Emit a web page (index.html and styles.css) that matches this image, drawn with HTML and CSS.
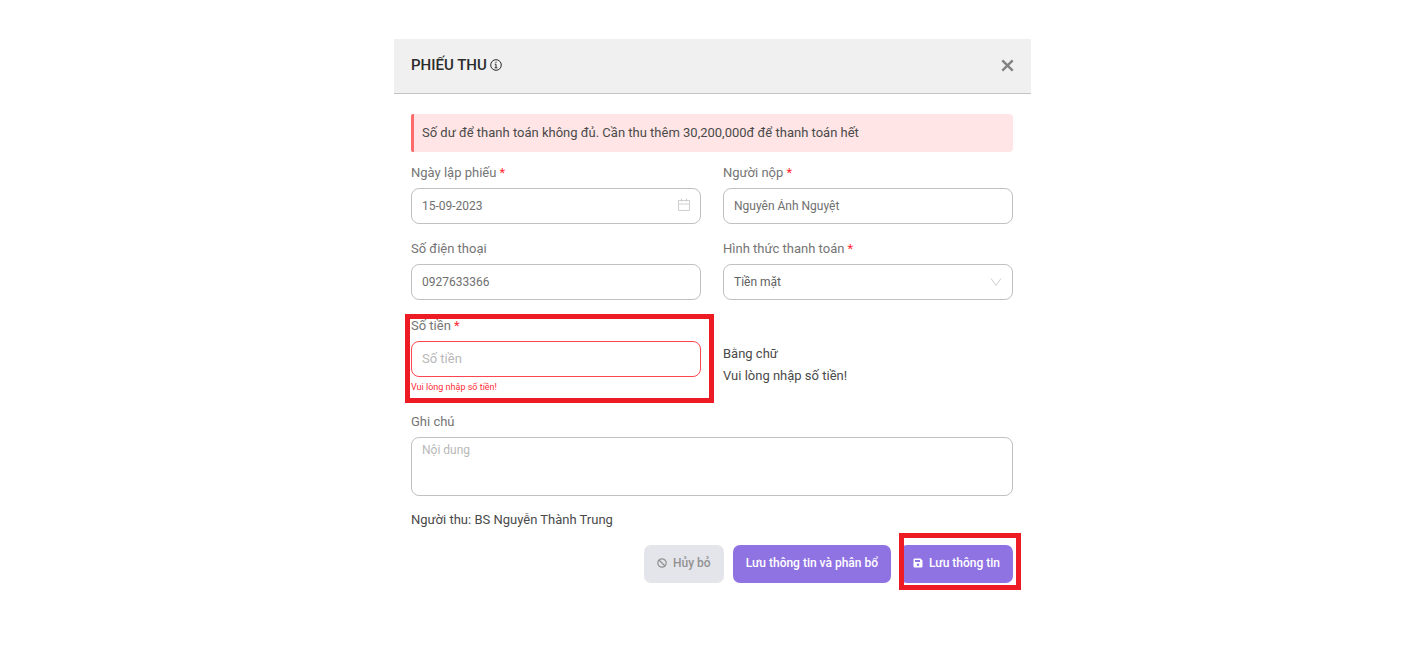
FILE: index.html
```html
<!DOCTYPE html>
<html lang="vi">
<head>
  <meta charset="UTF-8" />
  <meta name="viewport" content="width=device-width, initial-scale=1.0" />
  <title>Phiếu thu</title>
  <link rel="stylesheet" href="styles.css">
</head>

<body>
  <main class="modal">
    <header class="modal-header">
      <h1>PHIẾU THU</h1>
      <svg class="info" viewBox="0 0 12 12" aria-hidden="true">
        <circle cx="6" cy="6" r="5.3" />
        <path d="M6 2.7v1.2M4.8 5.2H6v3.6M4.6 8.8h2.8" />
      </svg>
      <button type="button" class="close" aria-label="Đóng">
        <svg viewBox="0 0 12 12"><path d="M1.2 1.2l9.6 9.6M10.8 1.2l-9.6 9.6" /></svg>
      </button>
    </header>

    <form class="modal-body">
      <p class="alert">Số dư để thanh toán không đủ. Cần thu thêm 30,200,000đ để thanh toán hết</p>

      <div class="grid">
        <div class="field">
          <label for="date">Ngày lập phiếu <span class="required">*</span></label>
          <div class="control">
            <input type="text" id="date" value="15-09-2023" />
            <svg class="calendar" viewBox="0 0 12 14" aria-hidden="true">
              <path d="M.5 2.5h11v10H.5zM.5 6h11M3.5 .5v3M8.5 .5v3" />
            </svg>
          </div>
        </div>

        <div class="field">
          <label for="payer">Người nộp <span class="required">*</span></label>
          <input type="text" id="payer" value="Nguyên Ánh Nguyệt" />
        </div>

        <div class="field">
          <label for="phone">Số điện thoại</label>
          <input type="text" id="phone" value="0927633366" />
        </div>

        <div class="field">
          <label for="method">Hình thức thanh toán <span class="required">*</span></label>
          <div class="control">
            <select id="method">
              <option>Tiền mặt</option>
            </select>
            <svg class="arrow" viewBox="0 0 12 8" aria-hidden="true"><path d="M1 .5l5 7 5-7" /></svg>
          </div>
        </div>

        <div class="field marked">
          <label for="amount">Số tiền <span class="required">*</span></label>
          <input type="text" id="amount" class="invalid" placeholder="Số tiền" />
          <p class="error">Vui lòng nhập số tiền!</p>
        </div>

        <div class="in-words">
          <p>Bằng chữ</p>
          <p>Vui lòng nhập số tiền!</p>
        </div>

        <div class="field wide">
          <label for="note">Ghi chú</label>
          <textarea id="note" placeholder="Nội dung"></textarea>
        </div>
      </div>

      <p class="collector">Người thu: BS Nguyễn Thành Trung</p>

      <div class="actions">
        <button type="button" class="btn btn-cancel">
          <svg class="ban" viewBox="0 0 10 10" aria-hidden="true">
            <circle cx="5" cy="5" r="4.2" /><path d="M2 2l6 6" />
          </svg>
          Hủy bỏ
        </button>
        <button type="button" class="btn">Lưu thông tin và phân bổ</button>
        <div class="marked-btn">
          <button type="submit" class="btn">
            <svg class="save" viewBox="0 0 10 10" aria-hidden="true">
              <path fill-rule="evenodd" d="M1.5.5h6L9.500 2.500V8.300A1.200 1.200 0 0 1 8.300 9.500H1.700A1.200 1.200 0 0 1 .5 8.300V1.700A1.200 1.200 0 0 1 1.500.5zM2 2v2h5V2zM5 5.500a1.300 1.300 0 1 0 0 2.600 1.300 1.300 0 0 0 0-2.600z" />
            </svg>
            Lưu thông tin
          </button>
        </div>
      </div>
    </form>
  </main>
</body>
</html>
```
FILE: styles.css
```css
* { box-sizing: border-box; }

body {
  margin: 0;
  padding: 39px 0 40px 9px;
  background: #fff;
  color: #4a4a4a;
  font: 13px/20px Roboto, "Liberation Sans", sans-serif;
}
h1, p { margin: 0; }
svg { fill: none; stroke: currentColor; }

.modal { max-width: 637px; margin: 0 auto; }

.modal-header {
  display: flex;
  align-items: center;
  gap: 3px;
  padding: 16px 17px 18px;
  background: #f0f0f0;
  border-bottom: 1px solid #c4c4c4;
  color: #2b2b2b;
}
.modal-header h1 { font-size: 15px; font-weight: 500; line-height: 20px; }
.info { width: 12px; height: 12px; }
.close {
  display: flex;
  margin-left: auto;
  padding: 0;
  border: 0;
  background: none;
  color: #828282;
  cursor: pointer;
}
.close svg { width: 13px; height: 13px; stroke-width: 2.2; }

.modal-body { padding: 20px 18px 0 17px; }

.alert {
  padding: 9px 8px;
  border-left: 3px solid #ff6b6b;
  border-radius: 2px 4px 4px 2px;
  background: #ffe5e5;
}

/* form fields */
.grid {
  display: grid;
  grid-template-columns: 1fr 1fr;
  gap: 15px 22px;
  margin-top: 11px;
}
.field { display: flex; flex-direction: column; }
.field label { margin-bottom: 5px; color: #757575; }
.required { color: #ff2b35; }
.wide { grid-column: 1 / -1; }

.control { position: relative; }
input, select, textarea {
  display: block;
  width: 100%;
  height: 36px;
  padding: 0 10px 1px;
  border: 1px solid #c0c0c0;
  border-radius: 8px;
  background: #fff;
  color: #707070;
  font: 12px/20px Roboto, "Liberation Sans", sans-serif;
}
select { appearance: none; color: #606060; }
textarea { height: 59px; padding-top: 2px; resize: none; }
::placeholder { color: #b8b8b8; opacity: 1; }
.invalid { border-color: #ff4550; font-size: 13px; }
.error { color: #ff2b35; font-size: 9px; }

.calendar, .arrow { position: absolute; color: #cfcfcf; pointer-events: none; }
.calendar { top: 10px; right: 11px; width: 12px; height: 14px; }
.arrow { top: 14px; right: 11px; width: 12px; height: 8px; }

.in-words { padding-top: 28px; line-height: 22px; }

/* red frames */
.marked, .marked-btn { position: relative; }
.marked { padding-top: 1px; }
.marked::after, .marked-btn::after {
  content: "";
  position: absolute;
  border: 5px solid #ed1c24;
  pointer-events: none;
}
.marked::after { inset: -1px -13px -6px -6px; }
.marked-btn::after { inset: -12px -8px -7px -1px; }

.collector { margin-top: 14px; }

.actions {
  display: flex;
  justify-content: flex-end;
  gap: 9px;
  margin-top: 15px;
}
.btn {
  display: flex;
  align-items: center;
  gap: 6px;
  height: 38px;
  padding: 0 13px 2px;
  border: 0;
  border-radius: 7px;
  background: #9073e3;
  color: #fff;
  font: 500 12px/20px Roboto, "Liberation Sans", sans-serif;
  cursor: pointer;
}
.btn-cancel { background: #e4e5eb; color: #929292; }
.btn svg { width: 10px; height: 10px; }
.ban { stroke-width: 1.2; }
.save { fill: currentColor; stroke: none; }
```
